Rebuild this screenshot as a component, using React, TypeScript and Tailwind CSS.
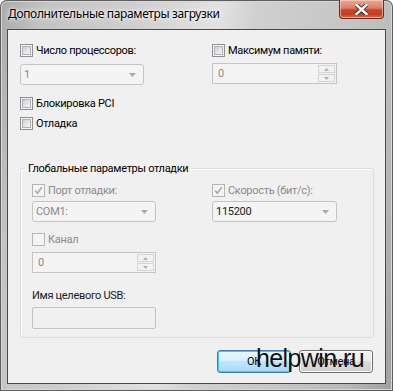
import React from "react";

const FONT = "font-['Roboto',sans-serif]";

function Check({ checked = false, disabled = false }: { checked?: boolean; disabled?: boolean }) {
  if (disabled) {
    return (
      <div className="w-[13px] h-[13px] shrink-0 border border-[#b5b5b5] bg-[#f4f4f4] flex items-center justify-center">
        {checked && (
          <svg width="9" height="9" viewBox="0 0 9 9">
            <path d="M1.2 4.6 L3.4 7.2 L7.8 1.3" fill="none" stroke="#a9a9a9" strokeWidth="1.6" />
          </svg>
        )}
      </div>
    );
  }
  return (
    <div className="w-[13px] h-[13px] shrink-0 border border-[#8e8f8f] bg-[#f4f4f4] p-[1px]">
      <div className="w-full h-full border border-[#aeb3b9] bg-[linear-gradient(135deg,#cdd1d6_0%,#e6e8ea_60%,#f6f6f6_100%)]" />
    </div>
  );
}

function CheckRow({
  label,
  checked,
  disabled,
  gray,
}: {
  label: string;
  checked?: boolean;
  disabled?: boolean;
  gray?: boolean;
}) {
  return (
    <div className="flex items-center h-[13px] gap-[3px]">
      <Check checked={checked} disabled={disabled} />
      <span className={`leading-[13px] whitespace-nowrap ${gray ? "text-[#8a8a8a]" : "text-[#000]"}`}>{label}</span>
    </div>
  );
}

function Combo({ value, width, dark }: { value: string; width: string; dark?: boolean }) {
  return (
    <div
      className={`h-[21px] ${width} border border-[#c4c4c4] rounded-[3px] bg-[#f4f4f4] flex items-center justify-between pl-[3px] pr-[7px]`}
    >
      <span className={`leading-[15px] ${dark ? "text-[#1a1a1a]" : "text-[#8a8a8a]"}`}>{value}</span>
      <svg width="7" height="4" viewBox="0 0 7 4">
        <path d="M0 0 H7 L3.5 4 Z" fill="#a9a9a9" />
      </svg>
    </div>
  );
}

function Spin({ value, width }: { value: string; width: string }) {
  return (
    <div className={`h-[21px] ${width} border border-[#c4c4c4] bg-[#f4f4f4] flex`}>
      <div className="flex-1 flex items-center pl-[5px]">
        <span className="leading-[15px] text-[#8a8a8a]">{value}</span>
      </div>
      <div className="w-[18px] flex flex-col gap-[1px] py-[1px] pr-[1px]">
        <div className="flex-1 border border-[#d3d3d3] bg-[#f2f2f2] flex items-center justify-center">
          <svg width="5" height="3" viewBox="0 0 5 3">
            <path d="M0 3 H5 L2.5 0 Z" fill="#b0b0b0" />
          </svg>
        </div>
        <div className="flex-1 border border-[#d3d3d3] bg-[#f2f2f2] flex items-center justify-center">
          <svg width="5" height="3" viewBox="0 0 5 3">
            <path d="M0 0 H5 L2.5 3 Z" fill="#b0b0b0" />
          </svg>
        </div>
      </div>
    </div>
  );
}

export default function App() {
  return (
    <div
      className={`${FONT} text-[11px] tracking-[-0.3px] relative w-[393px] h-[391px] overflow-hidden rounded-t-[7px] flex flex-col px-[7px] pb-[7px] bg-[linear-gradient(100deg,#a9a9a9_0%,#c3c3c3_10%,#cfcfcf_30%,#e2e2e2_48%,#d0d0d0_56%,#c6c6c6_75%,#b8b8b8_90%,#9f9f9f_100%)] shadow-[inset_0_0_0_1px_#5e5e5e,inset_0_0_0_2px_#d8d8d8]`}
    >
      {/* Title bar */}
      <div className="h-[29px] flex items-start justify-between shrink-0">
        <div className="pt-[6px] pl-[1px] leading-[15px] text-[12px] font-['Noto_Sans',sans-serif] tracking-[-0.35px] text-[#000] whitespace-nowrap [text-shadow:0_0_6px_#fff,0_0_3px_#fff]">
          Дополнительные параметры загрузки
        </div>
        <div className="mr-[2px] w-[45px] h-[19px] rounded-b-[4px] border border-t-0 border-[#6e2a1d] bg-[linear-gradient(180deg,#e9a896_0%,#dc7f69_45%,#c8432a_55%,#c2401f_80%,#d8704f_100%)] shadow-[inset_0_0_0_1px_rgba(255,220,210,0.55)] flex items-center justify-center">
          <svg width="13" height="11" viewBox="0 0 13 11">
            <path
              d="M1.5 1 L11.5 10 M11.5 1 L1.5 10"
              stroke="#3d2a27"
              strokeWidth="4.2"
              strokeLinecap="square"
            />
            <path d="M1.5 1 L11.5 10 M11.5 1 L1.5 10" stroke="#ffffff" strokeWidth="2.4" strokeLinecap="square" />
          </svg>
        </div>
      </div>

      {/* Client area */}
      <div className="flex-1 border border-[#4a4a4a] bg-[#f0f0f0] flex flex-col pt-[14px]">
        <div className="flex pl-[12px]">
          <div className="w-[192px] flex flex-col">
            <CheckRow label="Число процессоров:" />
            <div className="mt-[7px]">
              <Combo value="1" width="w-[124px]" />
            </div>
          </div>
          <div className="flex flex-col">
            <CheckRow label="Максимум памяти:" />
            <div className="mt-[6px]">
              <Spin value="0" width="w-[125px]" />
            </div>
          </div>
        </div>

        <div className="pl-[12px] mt-[12px] flex flex-col gap-[7px]">
          <CheckRow label="Блокировка PCI" />
          <CheckRow label="Отладка" />
        </div>

        <fieldset className="mt-[31px] ml-[12px] mr-[11px] border border-[#d5dfe5] rounded-[3px] shadow-[inset_1px_1px_0_#fff] pl-[11px] pt-[8px] pb-[8px]">
          <legend className="-ml-[7px] px-[3px] leading-[15px] text-[#000]">Глобальные параметры отладки</legend>
          <div className="flex">
            <div className="w-[180px] flex flex-col">
              <CheckRow label="Порт отладки:" checked disabled gray />
              <div className="mt-[4px]">
                <Combo value="COM1:" width="w-[124px]" />
              </div>
              <div className="mt-[11px]">
                <CheckRow label="Канал" disabled gray />
              </div>
              <div className="mt-[6px]">
                <Spin value="0" width="w-[124px]" />
              </div>
              <div className="mt-[15px] leading-[15px] text-[#1a1a1a]">Имя целевого USB:</div>
              <div className="mt-[4px] w-[124px] h-[22px] border border-[#c4c4c4] rounded-[2px] bg-[#f0f0f0]" />
            </div>
            <div className="flex flex-col">
              <CheckRow label="Скорость (бит/с):" checked disabled gray />
              <div className="mt-[4px]">
                <Combo value="115200" width="w-[125px]" dark />
              </div>
            </div>
          </div>
        </fieldset>

        <div className="mt-[12px] flex justify-end pr-[12px] gap-[8px]">
          <div className="w-[74px] h-[23px] rounded-[3px] border border-[#3c7fb1] bg-[linear-gradient(180deg,#eaf6fd_0%,#d9f0fc_45%,#bee6fd_50%,#a7d9f5_100%)] shadow-[inset_0_0_0_1px_#48c5f5] flex items-center justify-center leading-[15px] text-[#000]">
            ОК
          </div>
          <div className="w-[74px] h-[23px] rounded-[3px] border border-[#707070] bg-[linear-gradient(180deg,#f2f2f2_0%,#ebebeb_45%,#dddddd_50%,#cfcfcf_100%)] shadow-[inset_0_0_0_1px_#fbfbfb] flex items-center justify-center leading-[15px] text-[#000]">
            Отмена
          </div>
        </div>
      </div>

      {/* Watermark */}
      <div className="absolute left-[256px] top-[346px] font-['Liberation_Sans',sans-serif] text-[25px] leading-[25px] tracking-[-0.6px] text-[#111] pointer-events-none">
        helpwin.ru
      </div>
    </div>
  );
}
